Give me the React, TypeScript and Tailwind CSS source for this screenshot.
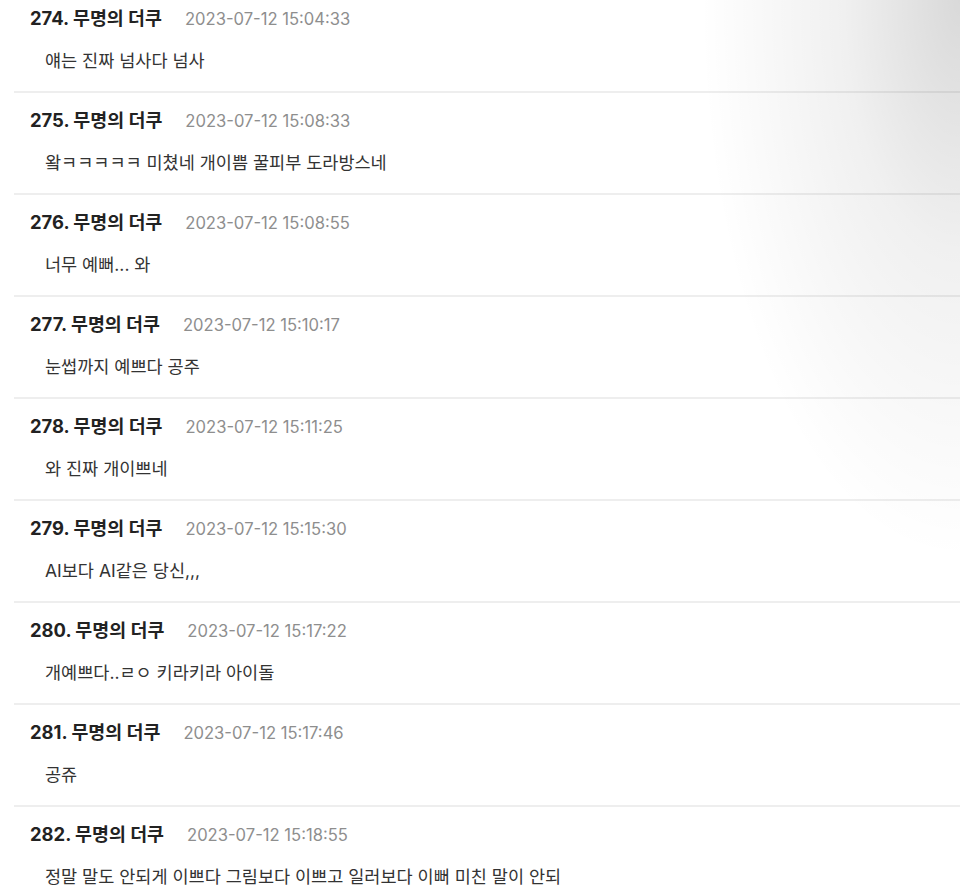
import React from 'react';

interface Comment {
  no: number;
  date: string;
  text: string;
}

const comments: Comment[] = [
  { no: 274, date: '2023-07-12 15:04:33', text: '얘는 진짜 넘사다 넘사' },
  { no: 275, date: '2023-07-12 15:08:33', text: '왘ㅋㅋㅋㅋㅋ 미쳤네 개이쁨 꿀피부 도라방스네' },
  { no: 276, date: '2023-07-12 15:08:55', text: '너무 예뻐... 와' },
  { no: 277, date: '2023-07-12 15:10:17', text: '눈썹까지 예쁘다 공주' },
  { no: 278, date: '2023-07-12 15:11:25', text: '와 진짜 개이쁘네' },
  { no: 279, date: '2023-07-12 15:15:30', text: 'AI보다 AI같은 당신,,,' },
  { no: 280, date: '2023-07-12 15:17:22', text: '개예쁘다..ㄹㅇ 키라키라 아이돌' },
  { no: 281, date: '2023-07-12 15:17:46', text: '공쥬' },
  { no: 282, date: '2023-07-12 15:18:55', text: '정말 말도 안되게 이쁘다 그림보다 이쁘고 일러보다 이뻐 미친 말이 안되' },
];

const CommentRow: React.FC<{ c: Comment }> = ({ c }) => (
  <div className="h-[102px] ml-[14px] pl-[16px] pt-[14px] border-b-2 border-[#eeeeee]">
    <div className="flex items-baseline">
      <span className="text-[18.4px] font-bold text-[#222222]">{c.no}. 무명의 더쿠</span>
      <span className="ml-[23px] text-[16.6px] text-[#8e8e8e]">{c.date}</span>
    </div>
    <p className="mt-[15px] pl-[15px] text-[17.5px] text-[#333333]">{c.text}</p>
  </div>
);

export default function App() {
  return (
    <div
      className="relative w-[960px] h-[892px] overflow-hidden bg-white"
      style={{ fontFamily: 'Inter, "Noto Sans CJK KR", sans-serif' }}
    >
      <div className="-mt-[9px]">
        {comments.map((c) => (
          <CommentRow key={c.no} c={c} />
        ))}
      </div>
      {/* page-curl shadow at top right */}
      <div className="pointer-events-none absolute top-0 right-0 w-[260px] h-[620px] bg-[radial-gradient(260px_560px_at_100%_0%,rgba(0,0,0,0.15)_0%,rgba(0,0,0,0.06)_45%,rgba(0,0,0,0)_100%)]" />
    </div>
  );
}
